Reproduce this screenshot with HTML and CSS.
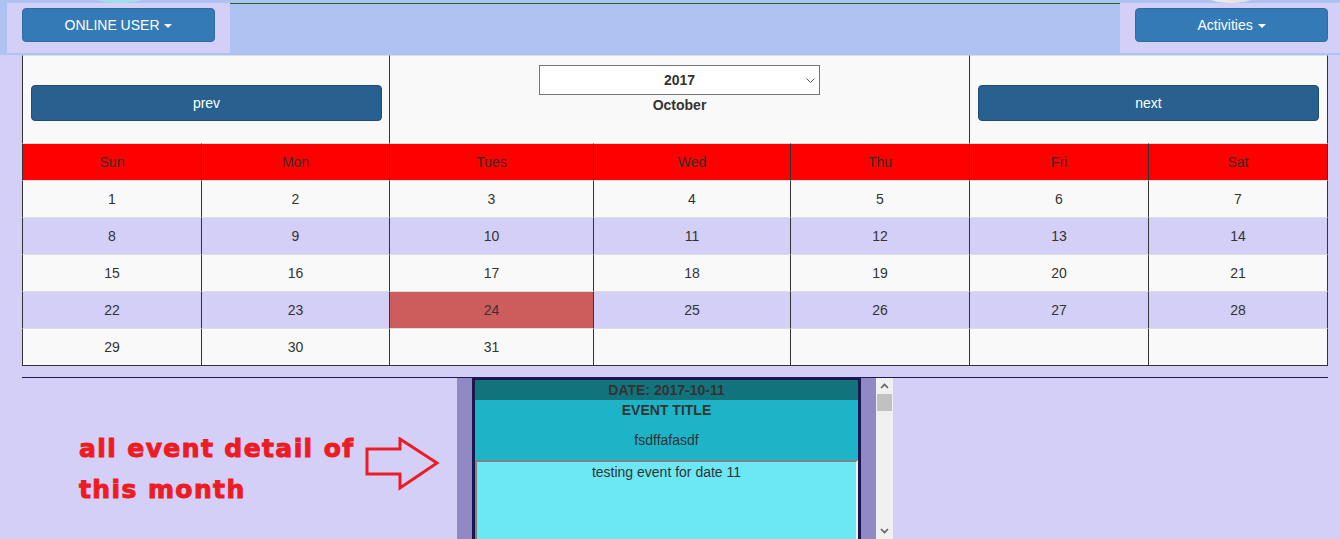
FILE: index.html
```html
<!DOCTYPE html>
<html lang="en">
<head>
<meta charset="utf-8">
<title>Event Calendar</title>
<link rel="stylesheet" href="styles.css">
</head>
<body>
<header class="topbar">
  <div class="navbox navbox-left">
    <button class="btn btn-top">ONLINE USER <span class="caret"></span></button>
  </div>
  <div class="topline"></div>
  <div class="navbox navbox-right">
    <button class="btn btn-top">Activities <span class="caret"></span></button>
  </div>
  <span class="blob blob-cyan"></span>
  <span class="blob blob-white"></span>
</header>

<main class="calendar">
  <div class="cal-row cal-nav">
    <div class="cell cell-btn"><button class="btn btn-nav">prev</button></div>
    <div class="cell cell-mid">
      <div class="year-select">2017
        <svg class="select-chev" width="9" height="6" viewBox="0 0 9 6"><path d="M0.5 0.5 L4.5 4.5 L8.5 0.5" fill="none" stroke="#555" stroke-width="1"/></svg>
      </div>
      <div class="month">October</div>
    </div>
    <div class="cell cell-btn cell-last"><button class="btn btn-nav">next</button></div>
  </div>

  <div class="cal-row week head">
    <div class="cell">Sun</div><div class="cell">Mon</div><div class="cell">Tues</div><div class="cell">Wed</div><div class="cell">Thu</div><div class="cell">Fri</div><div class="cell cell-last">Sat</div>
  </div>
  <div class="cal-row week odd">
    <div class="cell">1</div><div class="cell">2</div><div class="cell">3</div><div class="cell">4</div><div class="cell">5</div><div class="cell">6</div><div class="cell cell-last">7</div>
  </div>
  <div class="cal-row week even">
    <div class="cell">8</div><div class="cell">9</div><div class="cell">10</div><div class="cell">11</div><div class="cell">12</div><div class="cell">13</div><div class="cell cell-last">14</div>
  </div>
  <div class="cal-row week odd">
    <div class="cell">15</div><div class="cell">16</div><div class="cell">17</div><div class="cell">18</div><div class="cell">19</div><div class="cell">20</div><div class="cell cell-last">21</div>
  </div>
  <div class="cal-row week even">
    <div class="cell">22</div><div class="cell">23</div><div class="cell today">24</div><div class="cell">25</div><div class="cell">26</div><div class="cell">27</div><div class="cell cell-last">28</div>
  </div>
  <div class="cal-row week odd last-week">
    <div class="cell">29</div><div class="cell">30</div><div class="cell">31</div><div class="cell"></div><div class="cell"></div><div class="cell"></div><div class="cell cell-last"></div>
  </div>
</main>

<section class="events">
  <div class="note">
    <p class="note-text">all event detail of<br>this month</p>
    <svg class="note-arrow" width="75" height="54" viewBox="0 0 75 54">
      <polygon points="2,12 35,12 35,2 72,26 35,51 35,37 2,37" fill="none" stroke="#ed1c24" stroke-width="3" stroke-linejoin="miter"/>
    </svg>
  </div>
  <div class="event-panel">
    <div class="event-scroll">
      <div class="event-card">
        <div class="event-date">DATE: 2017-10-11</div>
        <div class="event-head">
          <div class="event-title">EVENT TITLE</div>
          <div class="event-name">fsdffafasdf</div>
        </div>
        <div class="event-desc">testing event for date 11</div>
      </div>
    </div>
    <div class="scrollbar">
      <svg class="sb-up" width="9" height="6" viewBox="0 0 9 6"><path d="M1 5 L4.5 1.5 L8 5" fill="none" stroke="#606060" stroke-width="1.6"/></svg>
      <div class="sb-thumb"></div>
      <svg class="sb-down" width="9" height="6" viewBox="0 0 9 6"><path d="M1 1 L4.5 4.5 L8 1" fill="none" stroke="#606060" stroke-width="1.6"/></svg>
    </div>
  </div>
</section>
</body>
</html>
```

FILE: styles.css
```css
html, body {
  margin: 0;
  padding: 0;
  height: 539px;
  overflow: hidden;
}

body {
  background: #d4cff7;
  font-family: "Liberation Sans", Arial, sans-serif;
  font-size: 14px;
  color: #333;
}

/* ---------- top bar ---------- */
.topbar {
  position: relative;
  display: flex;
  height: 55px;
  background: #afc3f3;
}

.navbox {
  box-sizing: border-box;
  margin-top: 3px;
  height: 50px;
  background: #d4cff7;
  padding: 5px 0 0 15px;
}

.navbox-left {
  margin-left: 7px;
  width: 223px;
}

.navbox-right {
  width: 220px;
}

.topline {
  flex: 1;
  margin-top: 3px;
  height: 0;
  border-top: 1px solid #1d6b2c;
}

.btn {
  font-family: "Liberation Sans", Arial, sans-serif;
  font-size: 14px;
  color: #fff;
  border-radius: 4px;
  cursor: pointer;
  padding: 0;
}

.btn-top {
  width: 193px;
  height: 34px;
  background: #337ab7;
  border: 1px solid #2e6da4;
}

.caret {
  display: inline-block;
  width: 0;
  height: 0;
  margin-left: 1px;
  vertical-align: middle;
  border-top: 4px solid #fff;
  border-left: 4px solid transparent;
  border-right: 4px solid transparent;
}

.blob {
  position: absolute;
  top: -20px;
  border-radius: 50%;
}

.blob-cyan {
  left: 86px;
  width: 66px;
  height: 23px;
  background: #9edff0;
}

.blob-white {
  left: 1202px;
  width: 58px;
  height: 23px;
  background: linear-gradient(90deg, #f2f2f2, #d9d9d9);
}

/* ---------- calendar ---------- */
.calendar {
  margin: 0 12px 0 22px;
  width: 1306px;
}

.cal-row {
  display: grid;
}

.week {
  grid-template-columns: 179px 188px 204px 197px 179px 179px 180px;
}

.cal-nav {
  grid-template-columns: 367px 580px 359px;
  background: #f9f9f9;
}

.cell {
  box-sizing: border-box;
  border-left: 1px solid #333;
  border-top: 1px solid #ddd;
}

.cell-last {
  border-right: 1px solid #333;
}

.cal-nav .cell {
  height: 88px;
}

.cell-btn {
  padding: 29px 7px 0 8px;
}

.cell-btn.cell-last {
  padding-right: 8px;
}

.btn-nav {
  display: block;
  width: 100%;
  height: 36px;
  background: #286090;
  border: 1px solid #204d74;
}

.cell-mid {
  padding-top: 9px;
  text-align: center;
}

.year-select {
  position: relative;
  box-sizing: border-box;
  width: 281px;
  height: 30px;
  margin: 0 auto;
  background: #fff;
  border: 1px solid #767676;
  font-weight: bold;
  line-height: 28px;
  text-align: center;
}

.select-chev {
  position: absolute;
  right: 4px;
  top: 12px;
}

.month {
  font-weight: bold;
  line-height: 20px;
}

.week .cell {
  height: 37px;
  line-height: 36px;
  text-align: center;
}

.head {
  background: #ff0000;
}

.head .cell {
  color: #3a2a2a;
}

.odd {
  background: #f9f9f9;
}

.even {
  background: #d4cff7;
}

.week .today {
  background: #cd5c5c;
}

.last-week .cell {
  height: 38px;
  border-bottom: 1px solid #333;
}

/* ---------- events ---------- */
.events {
  display: flex;
  margin: 11px 12px 0 22px;
  border-top: 1px solid #1d1a57;
}

.note {
  box-sizing: border-box;
  width: 435px;
  display: flex;
  align-items: flex-start;
  padding: 50px 0 0 57px;
}

.note-text {
  margin: 0;
  width: 286px;
  font-family: "DejaVu Sans", "Liberation Sans", sans-serif;
  font-weight: bold;
  font-size: 25px;
  line-height: 41px;
  letter-spacing: 1.4px;
  color: #ed1c24;
  -webkit-text-stroke: 1px #ed1c24;
}

.note-arrow {
  margin-top: 9px;
}

.event-panel {
  display: flex;
  height: 161px;
  width: 436px;
}

.event-scroll {
  box-sizing: border-box;
  width: 419px;
  padding: 0 15px;
  background: #9189c4;
  overflow: hidden;
}

.event-card {
  border: 3px solid #1a174f;
  border-top-width: 2px;
  border-bottom: none;
  text-align: center;
}

.event-date {
  height: 20px;
  line-height: 20px;
  background: #13737d;
  font-weight: bold;
}

.event-head {
  box-sizing: border-box;
  height: 60px;
  background: #1db4c7;
}

.event-title {
  font-weight: bold;
  line-height: 20px;
}

.event-name {
  margin-top: 10px;
  line-height: 20px;
}

.event-desc {
  height: 100px;
  line-height: 20px;
  background: #6ce8f4;
  border: 2px solid;
  border-color: #828282 #f0f0f0 #f0f0f0 #828282;
}

.scrollbar {
  position: relative;
  width: 17px;
  background: #f0f0f0;
}

.sb-up {
  position: absolute;
  left: 4px;
  top: 5px;
}

.sb-thumb {
  position: absolute;
  left: 1px;
  top: 16px;
  width: 15px;
  height: 17px;
  background: #c1c1c1;
}

.sb-down {
  position: absolute;
  left: 4px;
  bottom: 5px;
}
```
